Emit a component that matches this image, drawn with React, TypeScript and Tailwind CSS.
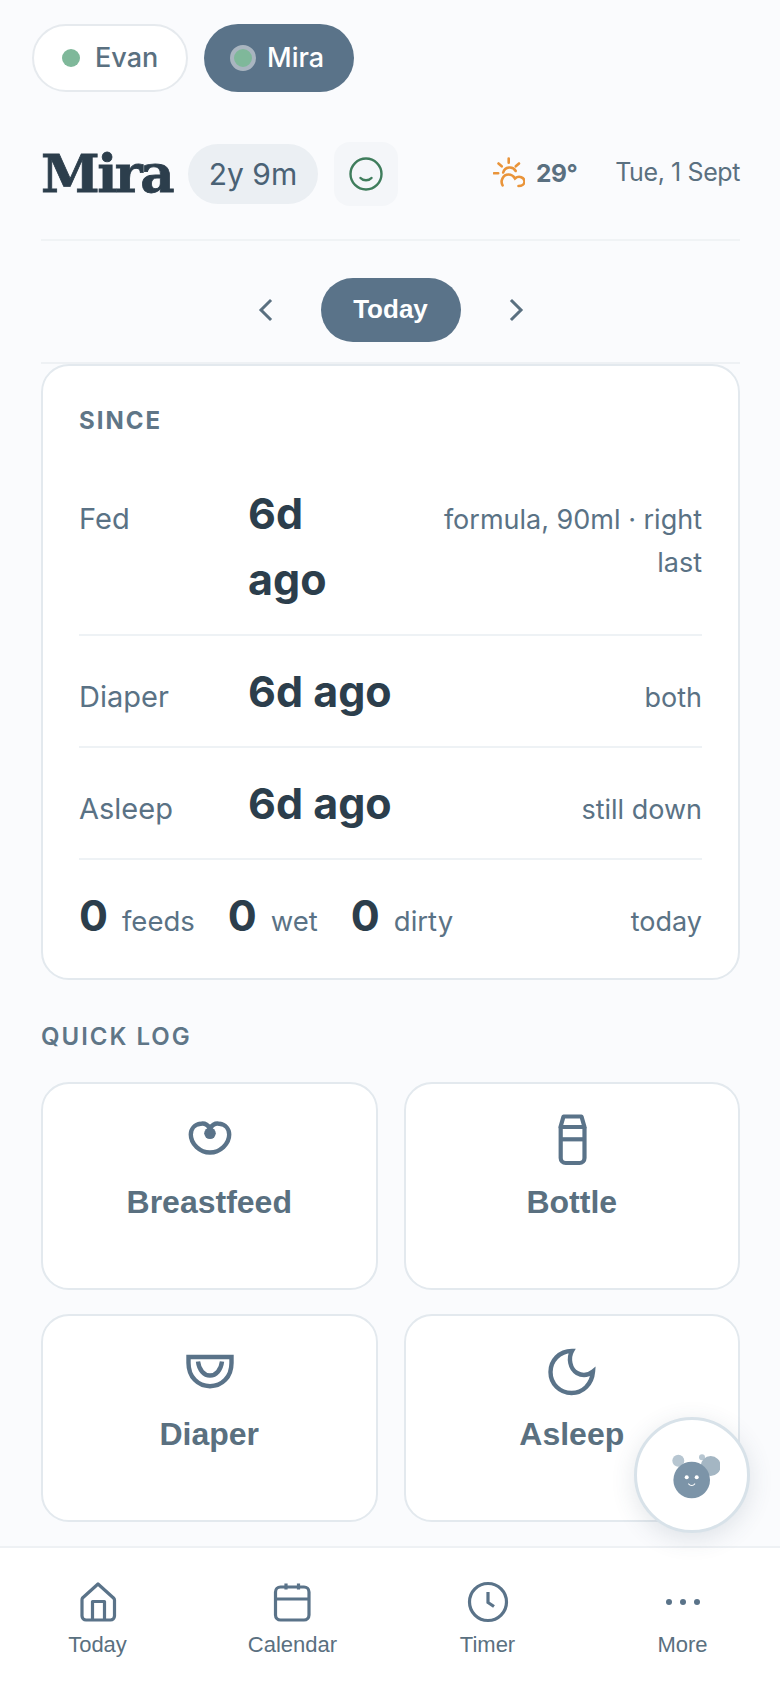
import React from 'react';

const SANS = "font-['Inter',sans-serif]";

const Row = ({ label, value, detail }: { label: string; value: React.ReactNode; detail: React.ReactNode }) => (
  <div className="flex items-baseline border-b-2 border-[#eef2f5] py-[22px]">
    <div className="w-[169px] text-[29px] leading-[40px] text-[#5a7285] shrink-0">{label}</div>
    <div className="text-[43px] leading-[66px] font-bold text-[#2c3e4c]">{value}</div>
    <div className="ml-auto text-right text-[27px] leading-[43px] text-[#5a7285]">{detail}</div>
  </div>
);

const Count = ({ n, label }: { n: number; label: string }) => (
  <div className="flex items-baseline mr-[33px]">
    <span className="text-[43px] leading-[66px] font-bold text-[#2c3e4c] mr-[14px]">{n}</span>
    <span className="text-[27.5px] text-[#5a7285]">{label}</span>
  </div>
);

const QuickButton = ({ label, children }: { label: string; children: React.ReactNode }) => (
  <button className="h-[208px] rounded-[28px] border-2 border-[#e3e9ee] bg-white flex flex-col items-center pt-[28px]">
    <div className="h-[56px] flex items-center justify-center">{children}</div>
    <div className="mt-[14px] font-['Liberation_Sans',sans-serif] font-bold text-[32px] leading-[40px] text-[#5a7080]">{label}</div>
  </button>
);

const NavItem = ({ label, children }: { label: string; children: React.ReactNode }) => (
  <div className="flex-1 flex flex-col items-center">
    <div className="h-[48px] flex items-center justify-center">{children}</div>
    <div className="mt-[5px] font-['Liberation_Sans',sans-serif] text-[22px] leading-[28px] text-[#5a7080]">{label}</div>
  </div>
);

export default function App() {
  return (
    <div className={`relative h-[1688px] w-[780px] overflow-hidden bg-[#fafbfd] flex flex-col ${SANS}`}>
      {/* child switcher */}
      <div className="flex gap-[16px] pl-[32px] pt-[24px]">
        <div className="h-[68px] w-[156px] rounded-full border-2 border-[#e6eaee] bg-white flex items-center pl-[28px]">
          <span className="w-[18px] h-[18px] rounded-full bg-[#7fb89a]" />
          <span className="ml-[15px] text-[27px] font-medium text-[#5a7080]">Evan</span>
        </div>
        <div className="h-[68px] w-[150px] rounded-full bg-[#5a7389] flex items-center pl-[26px]">
          <span className="w-[26px] h-[26px] rounded-full bg-[#7fb89a] border-4 border-[#a9b5c0]" />
          <span className="ml-[11px] text-[27px] font-medium text-white">Mira</span>
        </div>
      </div>

      {/* title row */}
      <div className="ml-[41px] mr-[40px] mt-[50px] h-[99px] border-b-2 border-[#f0f3f5] flex items-start">
        <div className="w-[131px] font-['DejaVu_Serif',serif] font-bold text-[53px] leading-[63px] text-[#2c3e4c] tracking-[-2.5px] [-webkit-text-stroke:0.8px_#2c3e4c]">Mira</div>
        <div className="ml-[16px] mt-[2px] h-[60px] w-[130px] rounded-full bg-[#ebeff3] flex items-center justify-center text-[30px] text-[#4a6275]">2y 9m</div>
        <div className="ml-[16px] w-[64px] h-[64px] rounded-[16px] bg-[#f4f6f9] flex items-center justify-center">
          <svg width="36" height="36" viewBox="0 0 36 36" fill="none" stroke="#3f7d5c" strokeWidth="2.4" strokeLinecap="round">
            <circle cx="18" cy="18" r="15.5" />
            <path d="M12.5 22c2.500 3 8.500 3 11 0" />
          </svg>
        </div>
        <div className="ml-auto flex items-center h-[62px]">
          <svg width="32" height="32" viewBox="8 6 32 32" fill="none" stroke="#e9943a" strokeWidth="2.600" strokeLinecap="round">
            <path d="M23.700 7.500v4.200M13.500 12.500l3.200 2.800M34 12.500l-3.200 2.800M9 22.300h4.200" />
            <path d="M18.200 21.500a6.800 6.800 0 0 1 12.500-1.500" />
            <path d="M17.600 34.300C15 30 18 23.500 23.500 23.500c3 0 5 1.500 6.500 4 4-3.500 9.500-1 9.500 3 0 2.500-2.500 4.500-6 4.500" />
          </svg>
          <span className="ml-[11px] text-[24.5px] font-bold text-[#5a7080] tracking-[-0.5px]">29°</span>
          <span className="ml-[38px] text-[25px] text-[#5a7080] tracking-[-0.4px]">Tue, 1 Sept</span>
        </div>
      </div>

      {/* day picker */}
      <div className="ml-[41px] mr-[40px] h-[123px] pt-[16px] border-b-2 border-[#eef1f4] flex items-center justify-center">
        <svg width="16" height="24" viewBox="0 0 16 24" fill="none" stroke="#5a7080" strokeWidth="3" strokeLinecap="square">
          <path d="M13 3 4 12l9 9" />
        </svg>
        <div className="mx-[48px] h-[64px] w-[140px] rounded-full bg-[#5a7389] flex items-center justify-center font-['Liberation_Sans',sans-serif] font-bold text-[26px] text-white">Today</div>
        <svg width="16" height="24" viewBox="0 0 16 24" fill="none" stroke="#5a7080" strokeWidth="3" strokeLinecap="square">
          <path d="m3 3 9 9-9 9" />
        </svg>
      </div>

      {/* since card */}
      <div className="ml-[41px] mr-[40px] h-[616px] rounded-[28px] border-2 border-[#e3e9ee] bg-white px-[36px] pt-[41px]">
        <div className="text-[24px] leading-[28px] font-bold tracking-[2px] text-[#5f7687]">SINCE</div>
        <div className="mt-[23px]">
          <Row
            label="Fed"
            value={<span className="block w-[120px]">6d ago</span>}
            detail={<>formula, 90ml · right<br />last</>}
          />
          <Row label="Diaper" value="6d ago" detail="both" />
          <Row label="Asleep" value="6d ago" detail="still down" />
          <div className="flex items-baseline pt-[22px]">
            <Count n={0} label="feeds" />
            <Count n={0} label="wet" />
            <Count n={0} label="dirty" />
            <span className="ml-auto text-[27px] text-[#5a7285]">today</span>
          </div>
        </div>
      </div>

      {/* quick log */}
      <div className="ml-[41px] mr-[40px] mt-[43px]">
        <div className="text-[24px] leading-[28px] font-semibold tracking-[2px] text-[#5f7687]">QUICK LOG</div>
        <div className="mt-[31px] grid grid-cols-2 gap-x-[26px] gap-y-[24px]">
          <QuickButton label="Breastfeed">
            <svg width="60" height="60" viewBox="-1 0 60 60" fill="none" stroke="#5a7389" strokeWidth="4.400">
              <path d="M30 18.500C27.500 14.500 24 13 20.500 13.800 14.500 14.500 10.800 19 10.800 24.500 10.800 34 20 42.500 30 42.500S49.200 34 49.200 24.500C49.200 19 45.500 14.500 39.500 13.800 36 13 32.500 14.500 30 18.500Z" />
              <circle cx="30" cy="23.300" r="5.800" fill="#5a7389" stroke="none" />
            </svg>
          </QuickButton>
          <QuickButton label="Bottle">
            <svg width="60" height="60" viewBox="-4 0 60 60" fill="none" stroke="#5a7389" strokeWidth="4.200" strokeLinejoin="round">
              <path d="M17.500 6.500h18l3 10.500h-24l3-10.500Z" />
              <path d="M14.700 17v31a5 5 0 0 0 5 5h13.800a5 5 0 0 0 5-5V17" />
              <path d="M14.700 29.300h23.800" />
            </svg>
          </QuickButton>
          <QuickButton label="Diaper">
            <svg width="60" height="60" viewBox="-1 -3 60 60" fill="none" stroke="#5a7389" strokeWidth="4.400">
              <path d="M8.500 12h43v6c0 14-9.500 23.200-21.500 23.200S8.500 32 8.500 18v-6Z" />
              <path d="M18 16.500c1 8.500 6 14 12 14s11-5.500 12-14" />
            </svg>
          </QuickButton>
          <QuickButton label="Asleep">
            <svg width="48" height="48" viewBox="0 0 48 48" fill="none" stroke="#5a7389" strokeWidth="4.400">
              <path d="M24 3C11 3 2.500 13 2.500 24c0 12 9.500 21 21 21S44 36 45 23.500c-5 4-11 4.500-16 1.500-7-4-9-15-5-22Z" />
            </svg>
          </QuickButton>
        </div>
      </div>

      {/* bottom nav */}
      <div className="mt-auto h-[142px] bg-white border-t-2 border-[#eef1f4] flex pt-[30px]">
        <NavItem label="Today">
          <svg width="60" height="48" viewBox="-2.500 3 60 48" fill="none" stroke="#5a7389" strokeWidth="3.200" strokeLinejoin="round">
            <path d="M27.500 9 12 23q-.5 1-.5 2v16a4 4 0 0 0 4 4H40a4 4 0 0 0 4-4V25q0-1-1-2L27.500 9Z" />
            <path d="M22 45V26.500h12V45" />
          </svg>
        </NavItem>
        <NavItem label="Calendar">
          <svg width="60" height="48" viewBox="-2.500 3 60 48" fill="none" stroke="#5a7389" strokeWidth="3.200" strokeLinejoin="round">
            <rect x="10" y="12" width="33.500" height="33" rx="5" />
            <path d="M10 24h33.500M20.500 8.500v6M33 8.500v6" />
          </svg>
        </NavItem>
        <NavItem label="Timer">
          <svg width="42" height="42" viewBox="0 0 42 42" fill="none" stroke="#5a7389" strokeWidth="3.200">
            <circle cx="21" cy="21" r="18.500" />
            <path d="M21 11v10.500l6 4" />
          </svg>
        </NavItem>
        <NavItem label="More">
          <svg width="36" height="8" viewBox="0 0 36 8" fill="#5a7389">
            <circle cx="4" cy="4" r="3" />
            <circle cx="18" cy="4" r="3" />
            <circle cx="32" cy="4" r="3" />
          </svg>
        </NavItem>
      </div>

      {/* floating mascot button */}
      <button className="absolute left-[634px] top-[1417px] w-[116px] h-[116px] rounded-full bg-white border-[3px] border-[#d8e2e9] shadow-[0_6px_24px_rgba(60,80,100,0.14)] flex items-center justify-center">
        <svg width="56" height="48" viewBox="-3 -2 56 48">
          <circle cx="11.300" cy="7.700" r="6" fill="#b7c6d1" />
          <circle cx="35" cy="4.300" r="3" fill="#b7c6d1" />
          <circle cx="43.700" cy="13" r="10" fill="#a4b6c3" />
          <circle cx="24.700" cy="27" r="18.300" fill="#7c94a8" />
          <circle cx="19.700" cy="24.300" r="2" fill="#fff" />
          <circle cx="29.700" cy="24.300" r="2" fill="#fff" />
          <path d="M21.700 31c1.500 2 4.500 2 6 0" fill="none" stroke="#fff" strokeWidth="1.200" strokeLinecap="round" />
        </svg>
      </button>
    </div>
  );
}
